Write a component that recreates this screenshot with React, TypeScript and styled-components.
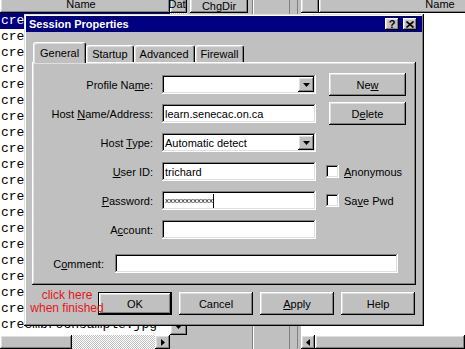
import React from 'react'
import styled, { createGlobalStyle, css } from 'styled-components'

const GlobalStyle = createGlobalStyle`
  html, body {
    margin: 0;
    padding: 0;
    background: #ffffff;
  }
  body {
    font-family: "Liberation Sans", Arial, sans-serif;
    font-size: 11px;
    color: #000;
  }
  * {
    box-sizing: border-box;
  }
`

const face = '#c0c0c0'

const raised = css`
  background: ${face};
  box-shadow: inset -1px -1px #000, inset 1px 1px #fff, inset -2px -2px #808080,
    inset 2px 2px #dfdfdf;
`

const sunken = css`
  box-shadow: inset -1px -1px #fff, inset 1px 1px #808080, inset -2px -2px #dfdfdf,
    inset 2px 2px #000;
`

const dither = css`
  background: repeating-conic-gradient(${face} 0% 25%, #ffffff 0% 50%) 0 0 / 2px 2px;
`

const Desktop = styled.div`
  position: relative;
  width: 465px;
  height: 349px;
  overflow: hidden;
  background: ${face};
`

// ---------- the FTP client behind the dialog ----------

const Panes = styled.div`
  display: flex;
  height: 354px;
  margin-top: -5px;
`

const LocalPane = styled.div`
  width: 187px;
  flex-shrink: 0;
  display: flex;
  flex-direction: column;
`

const HeaderRow = styled.div`
  display: flex;
  height: 18px;
  flex-shrink: 0;
  overflow: hidden;
`

const HeaderCell = styled.div<{ $w: number; $indent?: number }>`
  ${raised}
  width: ${(p) => p.$w}px;
  flex-shrink: 0;
  line-height: 18px;
  text-align: center;
  text-indent: ${(p) => p.$indent || 0}px;
  white-space: nowrap;
  overflow: hidden;
`

const ListArea = styled.div`
  flex: 1;
  min-height: 0;
  display: flex;
`

const FileList = styled.div`
  width: 170px;
  background: #fff;
  overflow: hidden;
  font-family: "Liberation Mono", "Courier New", monospace;
  font-size: 13px;
`

const FileRow = styled.div<{ $selected?: boolean }>`
  height: 16px;
  line-height: 16px;
  padding-left: 1px;
  white-space: nowrap;
  background: ${(p) => (p.$selected ? '#000080' : 'transparent')};
  color: ${(p) => (p.$selected ? '#fff' : '#000')};
`

const VScroll = styled.div`
  width: 17px;
  ${dither}
  display: flex;
  flex-direction: column;
  justify-content: flex-end;
`

const ScrollButton = styled.div<{ $w: number; $h: number }>`
  ${raised}
  width: ${(p) => p.$w}px;
  height: ${(p) => p.$h}px;
  flex-shrink: 0;
  display: flex;
  align-items: center;
  justify-content: center;
`

const BottomBar = styled.div`
  height: 14px;
  flex-shrink: 0;
  display: flex;
`

const HScroll = styled.div<{ $w?: number }>`
  display: flex;
  width: ${(p) => (p.$w ? `${p.$w}px` : 'auto')};
  flex: ${(p) => (p.$w ? '0 0 auto' : '1')};
`

const Thumb = styled.div<{ $w?: number }>`
  ${raised}
  width: ${(p) => (p.$w ? `${p.$w}px` : 'auto')};
  flex: ${(p) => (p.$w ? '0 0 auto' : '1')};
`

const Track = styled.div`
  flex: 1;
  ${dither}
`

const Corner = styled.div`
  width: 17px;
  background: ${face};
`

const MiddleColumn = styled.div`
  width: 110px;
  flex-shrink: 0;
  display: flex;
`

const ButtonStack = styled.div`
  width: 66px;
  padding-left: 3px;
  border-right: 1px solid #808080;
  display: flex;
  flex-direction: column;
  gap: 4px;
`

const ToolButton = styled.div`
  ${raised}
  width: 58px;
  height: 18px;
  line-height: 18px;
  padding-top: 2px;
  text-align: center;
`

const TransferColumn = styled.div`
  width: 37px;
  border-right: 1px solid #808080;
  border-left: 1px solid #fff;
`

const RemotePane = styled.div`
  flex: 1;
  min-width: 0;
  padding-left: 3px;
  border-left: 1px solid #808080;
  display: flex;
  flex-direction: column;
`

const RemoteList = styled.div`
  flex: 1;
  background: #fff;
`

// ---------- the dialog ----------

const Dialog = styled.div`
  position: absolute;
  left: 24px;
  top: 14px;
  width: 400px;
  height: 312px;
  padding: 2px;
  background: ${face};
  box-shadow: inset -1px -1px #000, inset 1px 1px #dfdfdf, inset -2px -2px #808080,
    inset 2px 2px #fff;
  display: flex;
  flex-direction: column;
`

const TitleBar = styled.div`
  height: 16px;
  flex-shrink: 0;
  background: #000080;
  color: #fff;
  display: flex;
  align-items: center;
  justify-content: space-between;
  padding: 0 5px 0 3px;
  font-weight: bold;
`

const TitleButtons = styled.div`
  display: flex;
  gap: 4px;
`

const TitleButton = styled.div`
  ${raised}
  width: 14px;
  height: 12px;
  display: flex;
  align-items: center;
  justify-content: center;
  color: #000;
  font-size: 11px;
  font-weight: bold;
  line-height: 12px;
`

const DialogBody = styled.div`
  flex: 1;
  padding: 10px 6px 0 6px;
  display: flex;
  flex-direction: column;
`

const TabStrip = styled.div`
  display: flex;
  align-items: flex-end;
  height: 20px;
  padding-left: 1px;
`

const Tab = styled.div<{ $active?: boolean }>`
  position: relative;
  z-index: ${(p) => (p.$active ? 1 : 0)};
  height: ${(p) => (p.$active ? 21 : 17)}px;
  margin-bottom: ${(p) => (p.$active ? -1 : 0)}px;
  padding: 0 ${(p) => (p.$active ? 6 : 5)}px;
  background: ${face};
  border: 1px solid;
  border-color: #fff #000 transparent #fff;
  border-bottom: none;
  border-radius: 3px 3px 0 0;
  box-shadow: inset -1px 0 #808080, inset 1px 1px #dfdfdf;
  display: flex;
  align-items: center;
  white-space: nowrap;
`

const TabPanel = styled.div`
  ${raised}
  height: 223px;
  padding: 13px 0 0 2px;
`

const FormGrid = styled.div`
  display: grid;
  grid-template-columns: 128px 154px 90px;
  grid-auto-rows: 19px;
  row-gap: 10px;
  align-items: center;
`

const Label = styled.div`
  text-align: right;
  padding-right: 9px;
  white-space: nowrap;
`

const Field = styled.div<{ $w?: number }>`
  ${sunken}
  background: #fff;
  height: 19px;
  width: ${(p) => (p.$w ? `${p.$w}px` : 'auto')};
  display: flex;
  align-items: center;
  padding: 0 2px 0 3px;
  white-space: nowrap;
`

const DropButton = styled.div`
  ${raised}
  width: 16px;
  height: 15px;
  margin-left: auto;
  display: flex;
  align-items: center;
  justify-content: center;
`

const PasswordDots = styled.span`
  font-size: 8px;
  letter-spacing: 0;
`

const Caret = styled.span`
  display: inline-block;
  width: 1px;
  height: 14px;
  background: #000;
`

const SideCell = styled.div<{ $pad: number }>`
  padding-left: ${(p) => p.$pad}px;
  display: flex;
  align-items: center;
  white-space: nowrap;
`

const Check = styled.span`
  ${sunken}
  background: #fff;
  width: 13px;
  height: 13px;
  margin-right: 5px;
  flex-shrink: 0;
`

const PushButton = styled.div<{ $w: number; $default?: boolean }>`
  ${raised}
  width: ${(p) => p.$w}px;
  height: 23px;
  flex-shrink: 0;
  display: flex;
  align-items: center;
  justify-content: center;
  ${(p) =>
    p.$default &&
    css`
      box-shadow: inset 0 0 0 1px #000, inset -2px -2px #000, inset 2px 2px #fff,
        inset -3px -3px #808080, inset 3px 3px #dfdfdf;
    `}
`

const CommentRow = styled.div`
  display: flex;
  align-items: center;
  gap: 11px;
  margin-top: 15px;
`

const CommentLabel = styled.div`
  width: 70px;
  text-align: right;
  white-space: nowrap;
`

const ButtonRow = styled.div`
  display: flex;
  justify-content: flex-end;
  gap: 7px;
  margin-top: 7px;
  padding-right: 1px;
`

const Annotation = styled.div`
  position: absolute;
  left: 28px;
  top: 289px;
  width: 78px;
  text-align: center;
  color: #e8141c;
  font-size: 12px;
  line-height: 13px;
  z-index: 2;
`

const Arrow = ({ dir }: { dir: 'down' | 'left' | 'right' }) => {
  const pts =
    dir === 'down' ? '0,0 7,0 3.5,4' : dir === 'right' ? '0,0 4,3.5 0,7' : '4,0 0,3.5 4,7'
  const w = dir === 'down' ? 7 : 4
  const h = dir === 'down' ? 4 : 7
  return (
    <svg width={w} height={h} viewBox={`0 0 ${w} ${h}`}>
      <polygon points={pts} fill="#000" />
    </svg>
  )
}

const CloseGlyph = () => (
  <svg width="8" height="7" viewBox="0 0 8 7">
    <path d="M0.5 0.5 L7.5 6.5 M7.5 0.5 L0.5 6.5" stroke="#000" strokeWidth="1.6" />
  </svg>
)

const files = [
  'cre8ablogo.gif',
  'cre8about.html',
  'cre8banner.jpg',
  'cre8bgtile.gif',
  'cre8brochure.pdf',
  'cre8bullet.gif',
  'cre8contact.html',
  'cre8email.gif',
  'cre8footer.gif',
  'cre8header.jpg',
  'cre8home.gif',
  'cre8index.html',
  'cre8links.html',
  'cre8logo.gif',
  'cre8menu.js',
  'cre8news.html',
  'cre8photo1.jpg',
  'cre8photo2.jpg',
  'cre8portfolio.html',
  'cre8mbrochsample.jpg',
  'cre9mbrochlistbd.html',
]

export default function App() {
  return (
    <Desktop>
      <GlobalStyle />
      <Panes>
        <LocalPane>
          <HeaderRow>
            <HeaderCell $w={170} $indent={-8}>
              Name
            </HeaderCell>
            <HeaderCell $w={17} $indent={-3}>
              Dat
            </HeaderCell>
          </HeaderRow>
          <ListArea>
            <FileList>
              {files.map((f, i) => (
                <FileRow key={f} $selected={i === 0}>
                  {f}
                </FileRow>
              ))}
            </FileList>
            <VScroll>
              <ScrollButton $w={17} $h={17}>
                <Arrow dir="down" />
              </ScrollButton>
            </VScroll>
          </ListArea>
          <BottomBar>
            <HScroll $w={170}>
              <Thumb $w={72} />
              <Track />
              <ScrollButton $w={15} $h={14}>
                <Arrow dir="right" />
              </ScrollButton>
            </HScroll>
            <Corner />
          </BottomBar>
        </LocalPane>

        <MiddleColumn>
          <ButtonStack>
            <ToolButton>ChgDir</ToolButton>
            <ToolButton>MkDir</ToolButton>
            <ToolButton>RmDir</ToolButton>
          </ButtonStack>
          <TransferColumn />
        </MiddleColumn>

        <RemotePane>
          <HeaderRow>
            <HeaderCell $w={18} />
            <HeaderCell $w={242}>Name</HeaderCell>
          </HeaderRow>
          <RemoteList />
          <BottomBar>
            <HScroll>
              <ScrollButton $w={14} $h={14}>
                <Arrow dir="left" />
              </ScrollButton>
              <Thumb />
            </HScroll>
          </BottomBar>
        </RemotePane>
      </Panes>

      <Dialog>
        <TitleBar>
          <span>Session Properties</span>
          <TitleButtons>
            <TitleButton>?</TitleButton>
            <TitleButton>
              <CloseGlyph />
            </TitleButton>
          </TitleButtons>
        </TitleBar>
        <DialogBody>
          <TabStrip>
            <Tab $active>General</Tab>
            <Tab>Startup</Tab>
            <Tab>Advanced</Tab>
            <Tab>Firewall</Tab>
          </TabStrip>
          <TabPanel>
            <FormGrid>
              <Label>
                Profile Na<u>m</u>e:
              </Label>
              <Field>
                <DropButton>
                  <Arrow dir="down" />
                </DropButton>
              </Field>
              <SideCell $pad={13}>
                <PushButton $w={77}>
                  Ne<u>w</u>
                </PushButton>
              </SideCell>

              <Label>
                Host <u>N</u>ame/Address:
              </Label>
              <Field>learn.senecac.on.ca</Field>
              <SideCell $pad={13}>
                <PushButton $w={77}>
                  D<u>e</u>lete
                </PushButton>
              </SideCell>

              <Label>
                Host <u>T</u>ype:
              </Label>
              <Field>
                Automatic detect
                <DropButton>
                  <Arrow dir="down" />
                </DropButton>
              </Field>
              <SideCell $pad={13} />

              <Label>
                <u>U</u>ser ID:
              </Label>
              <Field>trichard</Field>
              <SideCell $pad={10}>
                <Check />
                <span>
                  <u>A</u>nonymous
                </span>
              </SideCell>

              <Label>
                <u>P</u>assword:
              </Label>
              <Field>
                <PasswordDots>xxxxxxxxxxxx</PasswordDots>
                <Caret />
              </Field>
              <SideCell $pad={10}>
                <Check />
                <span>
                  Sa<u>v</u>e Pwd
                </span>
              </SideCell>

              <Label>
                A<u>c</u>count:
              </Label>
              <Field />
              <SideCell $pad={13} />
            </FormGrid>
            <CommentRow>
              <CommentLabel>
                C<u>o</u>mment:
              </CommentLabel>
              <Field $w={283} />
            </CommentRow>
          </TabPanel>
          <ButtonRow>
            <PushButton $w={74} $default>
              OK
            </PushButton>
            <PushButton $w={74}>Cancel</PushButton>
            <PushButton $w={74}>
              <u>A</u>pply
            </PushButton>
            <PushButton $w={74}>Help</PushButton>
          </ButtonRow>
        </DialogBody>
      </Dialog>

      <Annotation>
        click here
        <br />
        when finished
      </Annotation>
    </Desktop>
  )
}
